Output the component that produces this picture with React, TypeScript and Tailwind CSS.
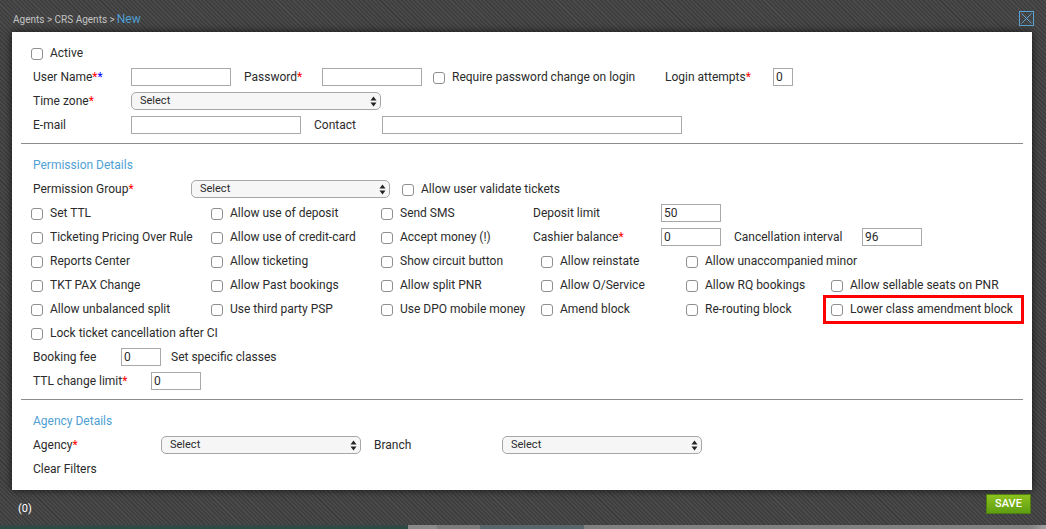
import React from "react";

function Star({ blue }: { blue?: boolean }) {
  return <span className={blue ? "text-[#0000ff]" : "text-[#ff0000]"}>*</span>;
}
function Check({ label, className }: { label: string; className: string }) {
  return (
    <label className={"flex items-center shrink-0 " + className}>
      <span className="block w-[12px] h-[12px] mt-[1px] ml-[-2px] border border-[#8f8f8f] rounded-[3px] bg-white shrink-0" />
      <span className="ml-[7px] whitespace-nowrap">{label}</span>
    </label>
  );
}
function Input({ className, value }: { className: string; value?: string }) {
  return (
    <div className={"h-[18px] border border-[#a9a9a9] bg-white shrink-0 pl-[2px] leading-[16px] " + className}>{value}</div>
  );
}
function Select({ className }: { className: string }) {
  return (
    <div className={"h-[18px] border border-[#a6a6a6] rounded-[5px] bg-[#f6f6f6] shrink-0 flex items-center justify-between pl-[8px] pr-[3px] text-[11px] " + className}>
      <span>Select</span>
      <svg width="7" height="11" viewBox="0 0 7 11"><path d="M3.5 0.5 6.5 4.5H.5zM3.5 10.5 .5 6.5H6.5z" fill="#222" /></svg>
    </div>
  );
}
function Row({ children }: { children: React.ReactNode }) {
  return <div className="h-[24px] flex items-center pl-[21px] whitespace-nowrap">{children}</div>;
}

export default function App() {
  return (
    <div className="w-[1046px] h-[529px] overflow-hidden flex flex-col bg-[repeating-linear-gradient(45deg,#3e3e3e_0px,#3e3e3e_1.5px,#4a4a4a_1.5px,#4a4a4a_3px)] font-['Roboto',sans-serif] text-[12px] text-[#2b2b2b]">
      <div className="h-[32px] flex items-center justify-between pl-[13px] pr-[12px] shrink-0">
        <div className="text-[#c4c4c4] text-[10px] mt-[5px] flex items-baseline gap-[2px]">
          <span>Agents &gt; CRS Agents &gt;</span>
          <span className="text-[#4f9fd4] text-[12px]">New</span>
        </div>
        <div className="w-[15px] h-[15px] mt-[5px] border border-[#5ba3d4] flex items-center justify-center">
          <svg width="11" height="11" viewBox="0 0 11 11"><path d="M.5.5 10.5 10.5M10.5.5.5 10.5" stroke="#5ba3d4" strokeWidth="1" /></svg>
        </div>
      </div>
      <div className="ml-[12px] mr-[14px] h-[458px] shrink-0 bg-white shadow-[0_0_8px_rgba(0,0,0,0.7)] pt-[9px] flex flex-col">
        <Row><Check label="Active" className="w-[100px]" /></Row>
        <Row>
          <span className="w-[98px] shrink-0">User Name<Star /><Star blue /></span>
          <Input className="w-[100px]" />
          <span className="w-[91px] shrink-0 pl-[13px]">Password<Star /></span>
          <Input className="w-[100px]" />
          <Check label="Require password change on login" className="w-[230px] ml-[13px]" />
          <span className="w-[108px] shrink-0">Login attempts<Star /></span>
          <Input className="w-[20px]" value="0" />
        </Row>
        <Row>
          <span className="w-[98px] shrink-0">Time zone<Star /></span>
          <Select className="w-[250px]" />
        </Row>
        <Row>
          <span className="w-[98px] shrink-0">E-mail</span>
          <Input className="w-[170px]" />
          <span className="w-[81px] shrink-0 pl-[13px]">Contact</span>
          <Input className="w-[300px]" />
        </Row>
        <div className="mx-[9px] mt-[6px] border-t border-[#8c8c8c]" />
        <div className="h-[24px] mt-[9px] flex items-center pl-[21px] text-[#4f9fd4]">Permission Details</div>
        <Row>
          <span className="w-[158px] shrink-0">Permission Group<Star /></span>
          <Select className="w-[199px]" />
          <Check label="Allow user validate tickets" className="ml-[14px]" />
        </Row>
        <Row>
          <Check label="Set TTL" className="w-[180px]" />
          <Check label="Allow use of deposit" className="w-[170px]" />
          <Check label="Send SMS" className="w-[150px]" />
          <span className="w-[128px] shrink-0">Deposit limit</span>
          <Input className="w-[60px]" value="50" />
        </Row>
        <Row>
          <Check label="Ticketing Pricing Over Rule" className="w-[180px]" />
          <Check label="Allow use of credit-card" className="w-[170px]" />
          <Check label="Accept money (!)" className="w-[150px]" />
          <span className="w-[128px] shrink-0">Cashier balance<Star /></span>
          <Input className="w-[60px]" value="0" />
          <span className="w-[141px] shrink-0 pl-[13px]">Cancellation interval</span>
          <Input className="w-[60px]" value="96" />
        </Row>
        <Row>
          <Check label="Reports Center" className="w-[180px]" />
          <Check label="Allow ticketing" className="w-[170px]" />
          <Check label="Show circuit button" className="w-[160px]" />
          <Check label="Allow reinstate" className="w-[145px]" />
          <Check label="Allow unaccompanied minor" className="w-[200px]" />
        </Row>
        <Row>
          <Check label="TKT PAX Change" className="w-[180px]" />
          <Check label="Allow Past bookings" className="w-[170px]" />
          <Check label="Allow split PNR" className="w-[160px]" />
          <Check label="Allow O/Service" className="w-[145px]" />
          <Check label="Allow RQ bookings" className="w-[145px]" />
          <Check label="Allow sellable seats on PNR" className="w-[190px]" />
        </Row>
        <Row>
          <Check label="Allow unbalanced split" className="w-[180px]" />
          <Check label="Use third party PSP" className="w-[170px]" />
          <Check label="Use DPO mobile money" className="w-[160px]" />
          <Check label="Amend block" className="w-[145px]" />
          <Check label="Re-routing block" className="w-[145px]" />
          <div className="relative">
            <Check label="Lower class amendment block" className="w-[190px]" />
            <div className="absolute left-[-10px] top-[-5px] w-[201px] h-[29px] border-[3px] border-[#ff0000]" />
          </div>
        </Row>
        <Row><Check label="Lock ticket cancellation after CI" className="w-[200px]" /></Row>
        <Row>
          <span className="w-[88px] shrink-0">Booking fee</span>
          <Input className="w-[40px]" value="0" />
          <span className="ml-[10px]">Set specific classes</span>
        </Row>
        <Row>
          <span className="w-[118px] shrink-0">TTL change limit<Star /></span>
          <Input className="w-[50px]" value="0" />
        </Row>
        <div className="mx-[9px] mt-[6px] border-t border-[#8c8c8c]" />
        <div className="h-[24px] mt-[9px] flex items-center pl-[21px] text-[#4f9fd4]">Agency Details</div>
        <Row>
          <span className="w-[128px] shrink-0">Agency<Star /></span>
          <Select className="w-[200px]" />
          <span className="w-[141px] shrink-0 pl-[13px]">Branch</span>
          <Select className="w-[200px]" />
        </Row>
        <Row>Clear Filters</Row>
      </div>
      <div className="flex-1 flex items-start justify-between pl-[18px] pr-[15px] pt-[4px]">
        <span className="text-white text-[11px] mt-[7px]">(0)</span>
        <div className="w-[45px] h-[20px] border border-[#4f7d10] bg-gradient-to-b from-[#8cc21f] to-[#5f9e12] text-white text-[11px] font-medium flex items-center justify-center">SAVE</div>
      </div>
      <div className="h-[4px] shrink-0 bg-[linear-gradient(90deg,#2f4a46_0px,#2f4a46_408px,#8a8a8a_408px,#8a8a8a_437px,#7b7b7b_437px,#7b7b7b_480px,#56666a_480px,#56666a_584px,#808080_584px,#808080_1030px,#a0a0a0_1046px)]" />
    </div>
  );
}
